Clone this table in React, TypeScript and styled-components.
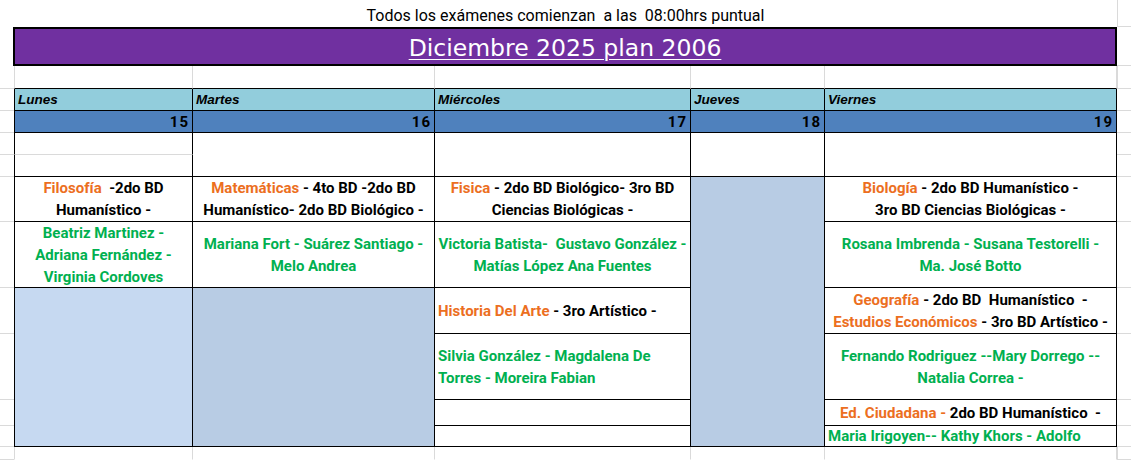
import React from "react";
import styled, { createGlobalStyle } from "styled-components";

const GRID_LINE = "#dadada";
const INK = "#000";

const GlobalStyle = createGlobalStyle`
  html, body {
    margin: 0;
    padding: 0;
    background: #fff;
  }
  body {
    font-family: Roboto, "Liberation Sans", Arial, sans-serif;
  }
`;

const Sheet = styled.div`
  display: grid;
  grid-template-columns: 14px 179px 242px 256px 134px 292px 14px;
  grid-template-rows: 27px 39px 23px 22px 22px 22px 22px 45px 66px 46px 66px 26px 21px 13px;
  width: 1131px;
  height: 460px;
  overflow: hidden;
`;

interface PlaceProps {
  $col: string;
  $row: string;
}

const Gutter = styled.div<PlaceProps & { $left?: boolean }>`
  grid-column: ${(p) => p.$col};
  grid-row: ${(p) => p.$row};
  box-sizing: border-box;
  border-bottom: 1px solid ${GRID_LINE};
  border-left: ${(p) => (p.$left ? `1px solid ${GRID_LINE}` : "none")};
`;

const Notice = styled.div<PlaceProps>`
  grid-column: ${(p) => p.$col};
  grid-row: ${(p) => p.$row};
  display: flex;
  align-items: flex-end;
  justify-content: center;
  padding-bottom: 1px;
  font-family: Roboto, "Liberation Sans", Arial, sans-serif;
  font-size: 16px;
  line-height: 20px;
  white-space: pre;
  color: #000;
`;

const Banner = styled.div<PlaceProps>`
  grid-column: ${(p) => p.$col};
  grid-row: ${(p) => p.$row};
  box-sizing: border-box;
  margin-left: -1px;
  background: #7030a0;
  border: 2px solid #000;
  display: flex;
  align-items: center;
  justify-content: center;
`;

const BannerTitle = styled.span`
  color: #fff;
  font-family: "DejaVu Sans", "Open Sans", sans-serif;
  font-size: 23.5px;
  text-decoration: underline;
  text-decoration-thickness: 1px;
  text-underline-offset: 3px;
  margin-top: 2px;
`;

const Blank = styled.div<PlaceProps & { $edge?: boolean; $ink?: boolean }>`
  grid-column: ${(p) => p.$col};
  grid-row: ${(p) => p.$row};
  box-sizing: border-box;
  border-right: 1px solid ${GRID_LINE};
  border-left: ${(p) => (p.$edge ? `1px solid ${GRID_LINE}` : "none")};
  border-bottom: 1px solid ${(p) => (p.$ink ? INK : "transparent")};
`;

type Align = "left" | "center" | "right";

const Cell = styled.div<
  PlaceProps & { $bg?: string; $align?: Align; $edge?: boolean; $soft?: boolean }
>`
  grid-column: ${(p) => p.$col};
  grid-row: ${(p) => p.$row};
  box-sizing: border-box;
  background: ${(p) => p.$bg ?? "#fff"};
  border-right: 1px solid ${INK};
  border-bottom: 1px solid ${(p) => (p.$soft ? GRID_LINE : INK)};
  border-left: ${(p) => (p.$edge ? `1px solid ${INK}` : "none")};
  display: flex;
  flex-direction: column;
  justify-content: center;
  align-items: ${(p) =>
    p.$align === "left" ? "flex-start" : p.$align === "right" ? "flex-end" : "center"};
  text-align: ${(p) => p.$align ?? "center"};
  padding: 0 3px;
  font-size: 15px;
  font-weight: 700;
  line-height: 22px;
  white-space: pre;
  overflow: hidden;
`;

const DayName = styled(Cell)`
  background: #92cddc;
  font-family: "Liberation Sans", Arial, sans-serif;
  font-style: italic;
  font-size: 13.5px;
  padding: 1px 0 0 3px;
`;

const DayNumber = styled(Cell)`
  background: #4f81bd;
  font-size: 15px;
  letter-spacing: 1px;
  padding: 1px 3px 0 0;
`;

const Line = styled.div``;

const Subject = styled.span`
  color: #ec6f1f;
`;

const Detail = styled.span`
  color: #000;
`;

const Teacher = styled.div`
  color: #00b050;
`;

const days = [
  { name: "Lunes", num: 15, col: "2" },
  { name: "Martes", num: 16, col: "3" },
  { name: "Miércoles", num: 17, col: "4" },
  { name: "Jueves", num: 18, col: "5" },
  { name: "Viernes", num: 19, col: "6" },
];

const rows = Array.from({ length: 14 }, (_, i) => i + 1);

const App = () => {
  return (
    <>
      <GlobalStyle />
      <Sheet>
        {rows.slice(2).map((r) => (
          <Gutter key={`l${r}`} $col="1" $row={String(r)} />
        ))}
        {rows.map((r) => (
          <Gutter key={`r${r}`} $col="7" $row={String(r)} $left={r === 1 || r === 3 || r === 14} />
        ))}

        <Notice $col="2 / 7" $row="1">
          {"Todos los exámenes comienzan  a las  08:00hrs puntual"}
        </Notice>
        <Banner $col="2 / 7" $row="2">
          <BannerTitle>Diciembre 2025 plan 2006</BannerTitle>
        </Banner>

        {days.map((d, i) => (
          <Blank key={`b${d.col}`} $col={d.col} $row="3" $edge={i === 0} $ink />
        ))}
        {days.map((d, i) => (
          <DayName key={`n${d.col}`} $col={d.col} $row="4" $align="left" $edge={i === 0}>
            {d.name}
          </DayName>
        ))}
        {days.map((d, i) => (
          <DayNumber key={`d${d.col}`} $col={d.col} $row="5" $align="right" $edge={i === 0}>
            {d.num}
          </DayNumber>
        ))}

        {/* Lunes */}
        <Cell $col="2" $row="6" $edge $soft />
        <Cell $col="2" $row="7" $edge />
        <Cell $col="2" $row="8" $edge>
          <Line>
            <Subject>Filosofía</Subject>
            <Detail>{"  -2do BD"}</Detail>
          </Line>
          <Line>Humanístico -</Line>
        </Cell>
        <Cell $col="2" $row="9" $edge>
          <Teacher>Beatriz Martinez -</Teacher>
          <Teacher>Adriana Fernández -</Teacher>
          <Teacher>Virginia Cordoves</Teacher>
        </Cell>
        <Cell $col="2" $row="10 / 14" $edge $bg="#c6d9f1" />

        {/* Martes */}
        <Cell $col="3" $row="6 / 8" />
        <Cell $col="3" $row="8">
          <Line>
            <Subject>Matemáticas</Subject>
            <Detail>{" - 4to BD -2do BD"}</Detail>
          </Line>
          <Line>Humanístico- 2do BD Biológico -</Line>
        </Cell>
        <Cell $col="3" $row="9">
          <Teacher>Mariana Fort - Suárez Santiago -</Teacher>
          <Teacher>Melo Andrea</Teacher>
        </Cell>
        <Cell $col="3" $row="10 / 14" $bg="#b8cce4" />

        {/* Miércoles */}
        <Cell $col="4" $row="6 / 8" />
        <Cell $col="4" $row="8">
          <Line>
            <Subject>Fisica</Subject>
            <Detail>{" - 2do BD Biológico- 3ro BD"}</Detail>
          </Line>
          <Line>Ciencias Biológicas -</Line>
        </Cell>
        <Cell $col="4" $row="9">
          <Teacher>{"Victoria Batista-  Gustavo González -"}</Teacher>
          <Teacher>Matías López Ana Fuentes</Teacher>
        </Cell>
        <Cell $col="4" $row="10" $align="left">
          <Line>
            <Subject>Historia Del Arte</Subject>
            <Detail>{" - 3ro Artístico -"}</Detail>
          </Line>
        </Cell>
        <Cell $col="4" $row="11" $align="left">
          <Teacher>Silvia González - Magdalena De</Teacher>
          <Teacher>Torres - Moreira Fabian</Teacher>
        </Cell>
        <Cell $col="4" $row="12" />
        <Cell $col="4" $row="13" />

        {/* Jueves */}
        <Cell $col="5" $row="6 / 8" />
        <Cell $col="5" $row="8 / 14" $bg="#b8cce4" />

        {/* Viernes */}
        <Cell $col="6" $row="6 / 8" />
        <Cell $col="6" $row="8">
          <Line>
            <Subject>Biología</Subject>
            <Detail>{" - 2do BD Humanístico -"}</Detail>
          </Line>
          <Line>3ro BD Ciencias Biológicas -</Line>
        </Cell>
        <Cell $col="6" $row="9">
          <Teacher>Rosana Imbrenda - Susana Testorelli -</Teacher>
          <Teacher>Ma. José Botto</Teacher>
        </Cell>
        <Cell $col="6" $row="10">
          <Line>
            <Subject>Geografía</Subject>
            <Detail>{" - 2do BD  Humanístico  -"}</Detail>
          </Line>
          <Line>
            <Subject>Estudios Económicos</Subject>
            <Detail>{" - 3ro BD Artístico -"}</Detail>
          </Line>
        </Cell>
        <Cell $col="6" $row="11">
          <Teacher>Fernando Rodriguez --Mary Dorrego --</Teacher>
          <Teacher>Natalia Correa -</Teacher>
        </Cell>
        <Cell $col="6" $row="12">
          <Line>
            <Subject>Ed. Ciudadana -</Subject>
            <Detail>{" 2do BD Humanístico  -"}</Detail>
          </Line>
        </Cell>
        <Cell $col="6" $row="13" $align="left">
          <Teacher>Maria Irigoyen-- Kathy Khors - Adolfo</Teacher>
        </Cell>

        {days.map((d, i) => (
          <Blank key={`f${d.col}`} $col={d.col} $row="14" $edge={i === 0} />
        ))}
      </Sheet>
    </>
  );
};

export default App;
